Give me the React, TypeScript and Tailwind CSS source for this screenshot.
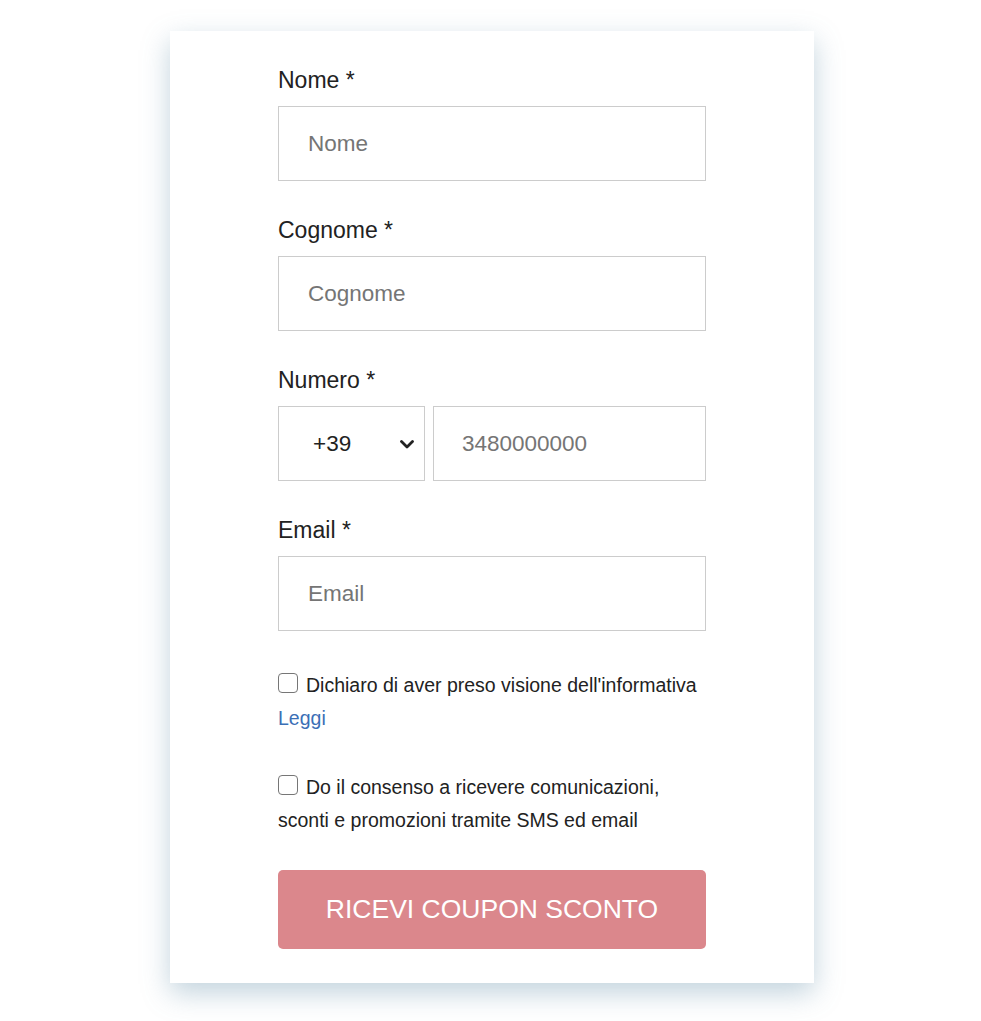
import React, { useState } from "react";

const font = { fontFamily: '"Liberation Sans", Arial, sans-serif' };

function Field({ label, placeholder }: { label: string; placeholder: string }) {
    return (
        <div className="flex flex-col">
            <label className="text-[23px] leading-[26px] text-[#222]">{label}</label>
            <input
                type="text"
                placeholder={placeholder}
                className="mt-[13px] h-[75px] w-full border border-[#cccccc] bg-white pl-[29px] text-[22.5px] text-[#222] outline-none placeholder:text-[#757575]"
            />
        </div>
    );
}

function Check({ children }: { children: React.ReactNode }) {
    const [on, setOn] = useState(false);
    return (
        <label className="block text-[19.5px] leading-[33px] text-[#222]">
            <input
                type="checkbox"
                checked={on}
                onChange={() => setOn(!on)}
                className="mr-[8px] inline-block h-[20px] w-[20px] appearance-none rounded-[4px] border-[1.5px] border-[#767676] bg-white align-[-1px] checked:bg-[#3b6fb6]"
            />
            {children}
        </label>
    );
}

export default function App() {
    return (
        <div className="min-h-screen bg-white pt-[31px]" style={font}>
            <div className="ml-[170px] w-[644px] bg-white pt-[36px] pb-[34px] shadow-[0_10px_26px_rgba(95,140,165,0.38)]">
                <form className="mx-auto flex w-[428px] flex-col">
                    <Field label="Nome *" placeholder="Nome" />
                    <div className="mt-[36px]">
                        <Field label="Cognome *" placeholder="Cognome" />
                    </div>

                    <div className="mt-[36px] flex flex-col">
                        <label className="text-[23px] leading-[26px] text-[#222]">Numero *</label>
                        <div className="mt-[13px] flex gap-[8px]">
                            <div className="relative h-[75px] w-[147px] shrink-0 border border-[#cccccc] bg-white">
                                <select className="h-full w-full appearance-none bg-transparent pl-[34px] text-[22.5px] text-[#222] outline-none">
                                    <option>+39</option>
                                    <option>+41</option>
                                    <option>+44</option>
                                </select>
                                <svg
                                    className="pointer-events-none absolute right-[10px] top-[33px]"
                                    width="14"
                                    height="9"
                                    viewBox="0 0 14 9"
                                    fill="none"
                                >
                                    <path d="M1.5 1.5 L7 7 L12.5 1.5" stroke="#222" strokeWidth="2.8" strokeLinecap="round" strokeLinejoin="round" />
                                </svg>
                            </div>
                            <input
                                type="tel"
                                placeholder="3480000000"
                                className="h-[75px] min-w-0 flex-1 border border-[#cccccc] bg-white pl-[28px] text-[22.5px] text-[#222] outline-none placeholder:text-[#757575]"
                            />
                        </div>
                    </div>

                    <div className="mt-[36px]">
                        <Field label="Email *" placeholder="Email" />
                    </div>

                    <div className="mt-[38px]">
                        <Check>
                            Dichiaro di aver preso visione dell'informativa
                            <a href="#" className="block text-[#3b6fb6]">Leggi</a>
                        </Check>
                    </div>

                    <div className="mt-[36px]">
                        <Check>
                            Do il consenso a ricevere comunicazioni,
                            <br />
                            sconti e promozioni tramite SMS ed email
                        </Check>
                    </div>

                    <button
                        type="submit"
                        className="mt-[33px] h-[79px] w-full rounded-[5px] bg-[#db878c] text-[26.5px] uppercase text-white"
                    >
                        Ricevi coupon sconto
                    </button>
                </form>
            </div>
        </div>
    );
}
